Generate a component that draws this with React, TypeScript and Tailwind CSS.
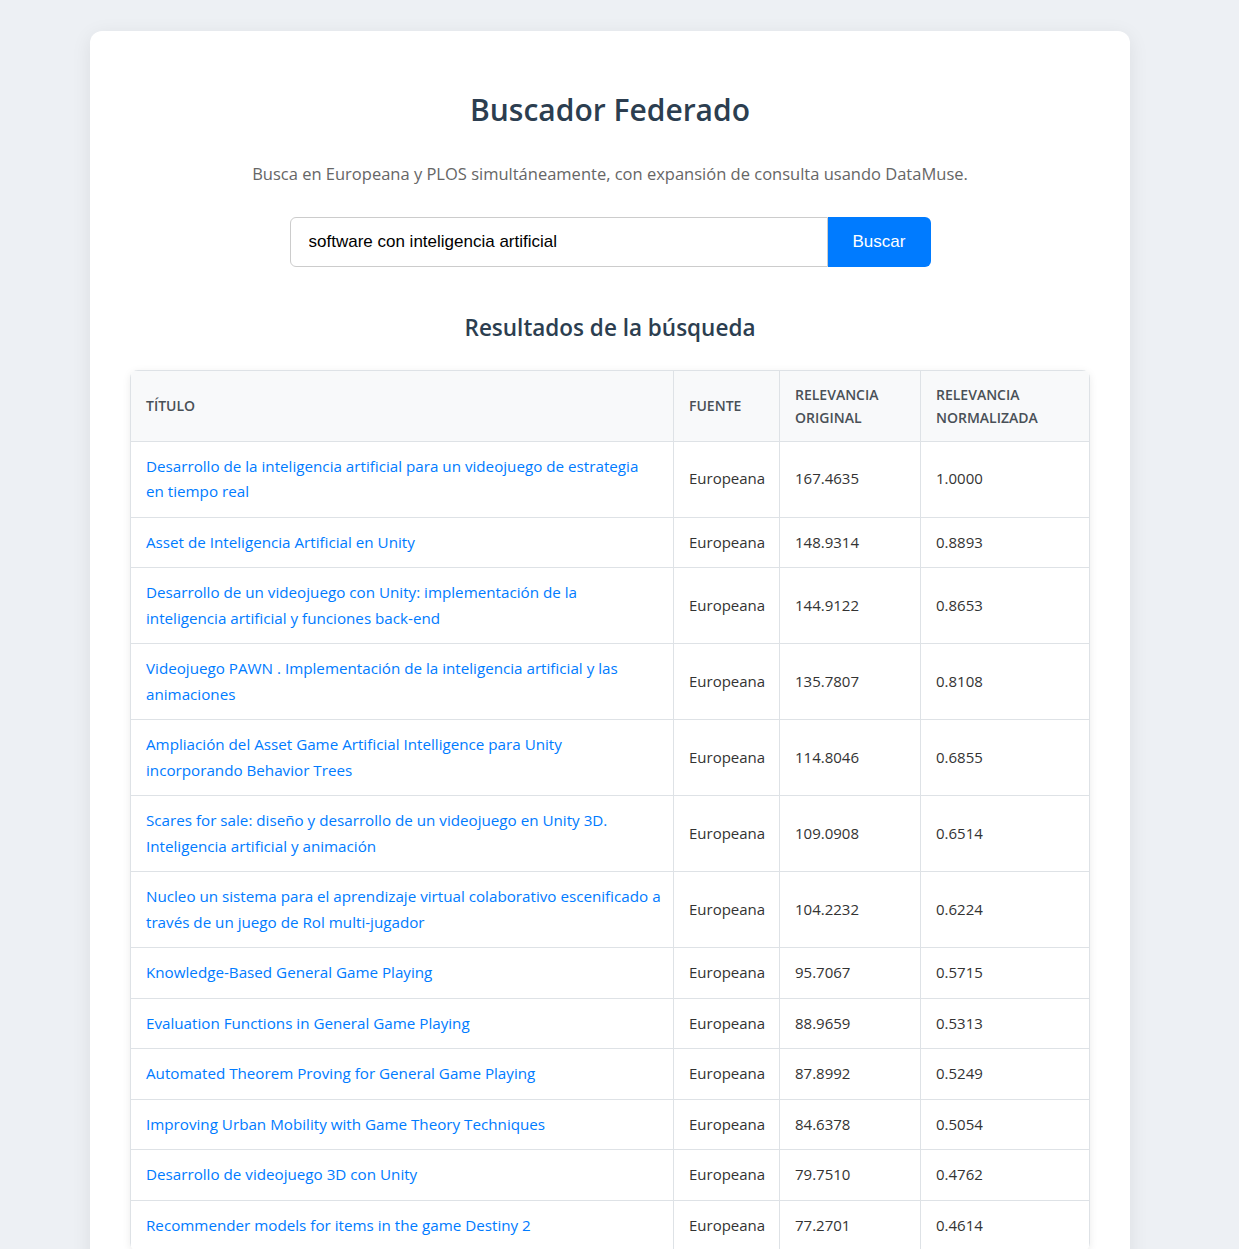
import React from "react";

const rows: [string[], string, string, string][] = [
  [["Desarrollo de la inteligencia artificial para un videojuego de estrategia", "en tiempo real"], "Europeana", "167.4635", "1.0000"],
  [["Asset de Inteligencia Artificial en Unity"], "Europeana", "148.9314", "0.8893"],
  [["Desarrollo de un videojuego con Unity: implementación de la", "inteligencia artificial y funciones back-end"], "Europeana", "144.9122", "0.8653"],
  [["Videojuego PAWN . Implementación de la inteligencia artificial y las", "animaciones"], "Europeana", "135.7807", "0.8108"],
  [["Ampliación del Asset Game Artificial Intelligence para Unity", "incorporando Behavior Trees"], "Europeana", "114.8046", "0.6855"],
  [["Scares for sale: diseño y desarrollo de un videojuego en Unity 3D.", "Inteligencia artificial y animación"], "Europeana", "109.0908", "0.6514"],
  [["Nucleo un sistema para el aprendizaje virtual colaborativo escenificado a", "través de un juego de Rol multi-jugador"], "Europeana", "104.2232", "0.6224"],
  [["Knowledge-Based General Game Playing"], "Europeana", "95.7067", "0.5715"],
  [["Evaluation Functions in General Game Playing"], "Europeana", "88.9659", "0.5313"],
  [["Automated Theorem Proving for General Game Playing"], "Europeana", "87.8992", "0.5249"],
  [["Improving Urban Mobility with Game Theory Techniques"], "Europeana", "84.6378", "0.5054"],
  [["Desarrollo de videojuego 3D con Unity"], "Europeana", "79.7510", "0.4762"],
  [["Recommender models for items in the game Destiny 2"], "Europeana", "77.2701", "0.4614"],
];

export default function App() {
  return (
    <div className="min-h-screen bg-[#edf0f4] pt-[31px] pb-10" style={{ fontFamily: '"Open Sans", "Noto Sans", sans-serif' }}>
      <div className="ml-[90px] w-[1040px] rounded-xl bg-white px-10 pt-[60px] pb-10 shadow-[0_4px_20px_rgba(0,0,0,0.08)]">
        <h1 className="text-center text-[30px] font-semibold leading-[38px] text-[#2c3e50]">Buscador Federado</h1>
        <p className="mt-[37px] text-center text-[16.5px] leading-[1] text-[#666]">
          Busca en Europeana y PLOS simultáneamente, con expansión de consulta usando DataMuse.
        </p>
        <div className="mx-auto mt-[34px] flex w-[641px]">
          <input
            readOnly
            value="software con inteligencia artificial"
            className="h-[50px] flex-1 rounded-l-md border border-[#ccc] px-[18px] text-[17px] text-black outline-none"
            style={{ fontFamily: '"Liberation Sans", Arial, sans-serif' }}
          />
          <button
            className="h-[50px] w-[103px] rounded-r-md bg-[#007bff] text-[17px] text-white"
            style={{ fontFamily: '"Liberation Sans", Arial, sans-serif' }}
          >
            Buscar
          </button>
        </div>
        <h2 className="mt-[46px] text-center text-[22.5px] font-semibold leading-[30px] text-[#2c3e50]">Resultados de la búsqueda</h2>
        <div className="mt-[27px] overflow-hidden rounded-lg shadow-[0_2px_8px_rgba(0,0,0,0.08)]">
          <table className="w-full table-fixed border-collapse text-[15px] leading-[25.5px]">
            <colgroup>
              <col className="w-[543px]" />
              <col className="w-[106px]" />
              <col className="w-[141px]" />
              <col />
            </colgroup>
            <thead>
              <tr className="bg-[#f8f9fa]">
                {["Título", "Fuente", "Relevancia Original", "Relevancia Normalizada"].map((h) => (
                  <th
                    key={h}
                    className="border border-[#dee2e6] px-[15px] py-3 text-left text-[14px] font-semibold uppercase leading-[23px] text-[#495057]"
                  >
                    {h}
                  </th>
                ))}
              </tr>
            </thead>
            <tbody>
              {rows.map((r) => (
                <tr key={r[0].join(" ")}>
                  <td className="border border-[#dee2e6] px-[15px] py-3 align-middle text-[15.2px]">
                    <a href="#" className="text-[#007bff]">
                      {r[0].map((line, i) => (
                        <span key={i} className="block whitespace-nowrap">{line}</span>
                      ))}
                    </a>
                  </td>
                  <td className="border border-[#dee2e6] px-[15px] py-3 text-[#333]">{r[1]}</td>
                  <td className="border border-[#dee2e6] px-[15px] py-3 text-[#333]">{r[2]}</td>
                  <td className="border border-[#dee2e6] px-[15px] py-3 text-[#333]">{r[3]}</td>
                </tr>
              ))}
            </tbody>
          </table>
        </div>
      </div>
    </div>
  );
}
